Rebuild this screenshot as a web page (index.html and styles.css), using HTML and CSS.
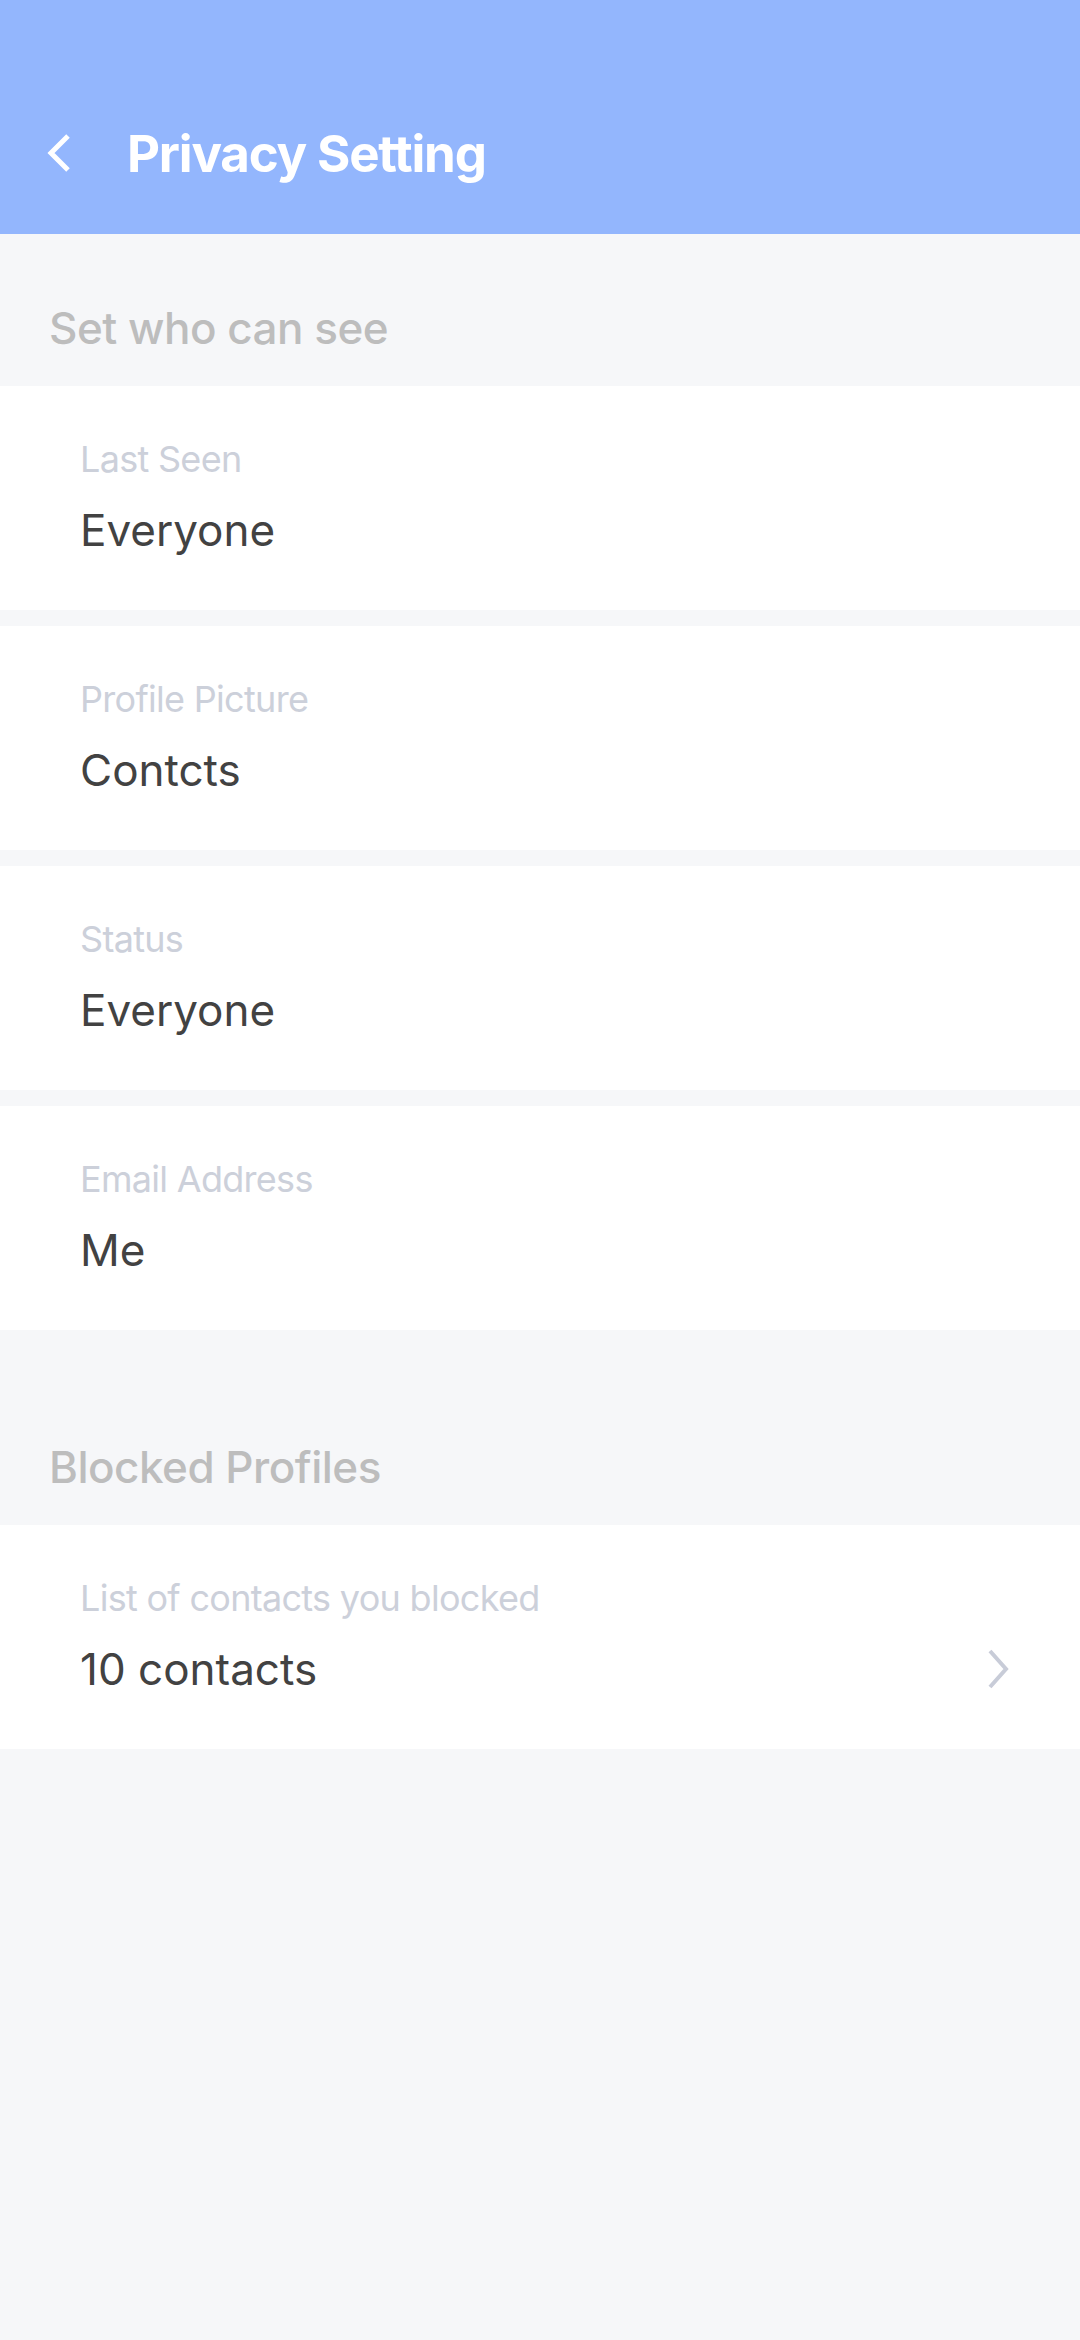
FILE: index.html
```html
<!DOCTYPE html>
<html lang="en">
<head>
    <meta charset="UTF-8">
    <meta name="viewport" content="width=device-width, initial-scale=1.0">
    <title>Privacy Setting</title>
    <link rel="stylesheet" href="styles.css">
</head>
<body>
    <div class="header">
        <svg class="back" width="28" height="42" viewBox="0 0 28 42">
            <polyline points="22,3 5,20 22,37" fill="none" stroke="#fff" stroke-width="5"/>
        </svg>
        <h1>Privacy Setting</h1>
    </div>

    <div class="section-title">Set who can see</div>
    <div class="list">
        <div class="item">
            <div class="label">Last Seen</div>
            <div class="value">Everyone</div>
        </div>
        <div class="item">
            <div class="label">Profile Picture</div>
            <div class="value">Contcts</div>
        </div>
        <div class="item">
            <div class="label">Status</div>
            <div class="value">Everyone</div>
        </div>
        <div class="item">
            <div class="label">Email Address</div>
            <div class="value">Me</div>
        </div>
    </div>

    <div class="section-title second">Blocked Profiles</div>
    <div class="list">
        <div class="item">
            <div class="label">List of contacts you blocked</div>
            <div class="value-row">
                <div class="value">10 contacts</div>
                <svg class="arrow" width="26" height="40" viewBox="0 0 26 40">
                    <polyline points="5,2 21,20 5,38" fill="none" stroke="#c8ccd8" stroke-width="4"/>
                </svg>
            </div>
        </div>
    </div>
</body>
</html>
```

FILE: styles.css
```css
body {
    margin: 0;
    min-height: 2340px;
    background-color: #f6f7f9;
    font-family: Inter, "Noto Sans", sans-serif;
}

.header {
    display: flex;
    align-items: center;
    height: 234px;
    box-sizing: border-box;
    padding: 128px 0 55px 46px;
    background-color: #93b6fd;
}

.back {
    margin-right: 53px;
}

.header h1 {
    margin: 0;
    font-size: 51px;
    line-height: 51px;
    font-weight: 700;
    letter-spacing: -1.2px;
    color: #fff;
}

.section-title {
    padding: 72px 49px 36px;
    font-size: 44px;
    line-height: 44px;
    font-weight: 500;
    letter-spacing: -0.5px;
    color: #bdbdbd;
}

.section-title.second {
    padding-top: 115px;
}

.list {
    display: flex;
    flex-direction: column;
    gap: 16px;
}

.item {
    background-color: #fff;
    padding: 55px 69px 58px 80px;
}

.label {
    font-size: 36px;
    line-height: 36px;
    letter-spacing: -0.7px;
    color: #ccd0da;
    margin-bottom: 31px;
}

.value {
    font-size: 44px;
    line-height: 44px;
    color: #424242;
}

.value-row {
    display: flex;
    justify-content: space-between;
    align-items: center;
}
```
